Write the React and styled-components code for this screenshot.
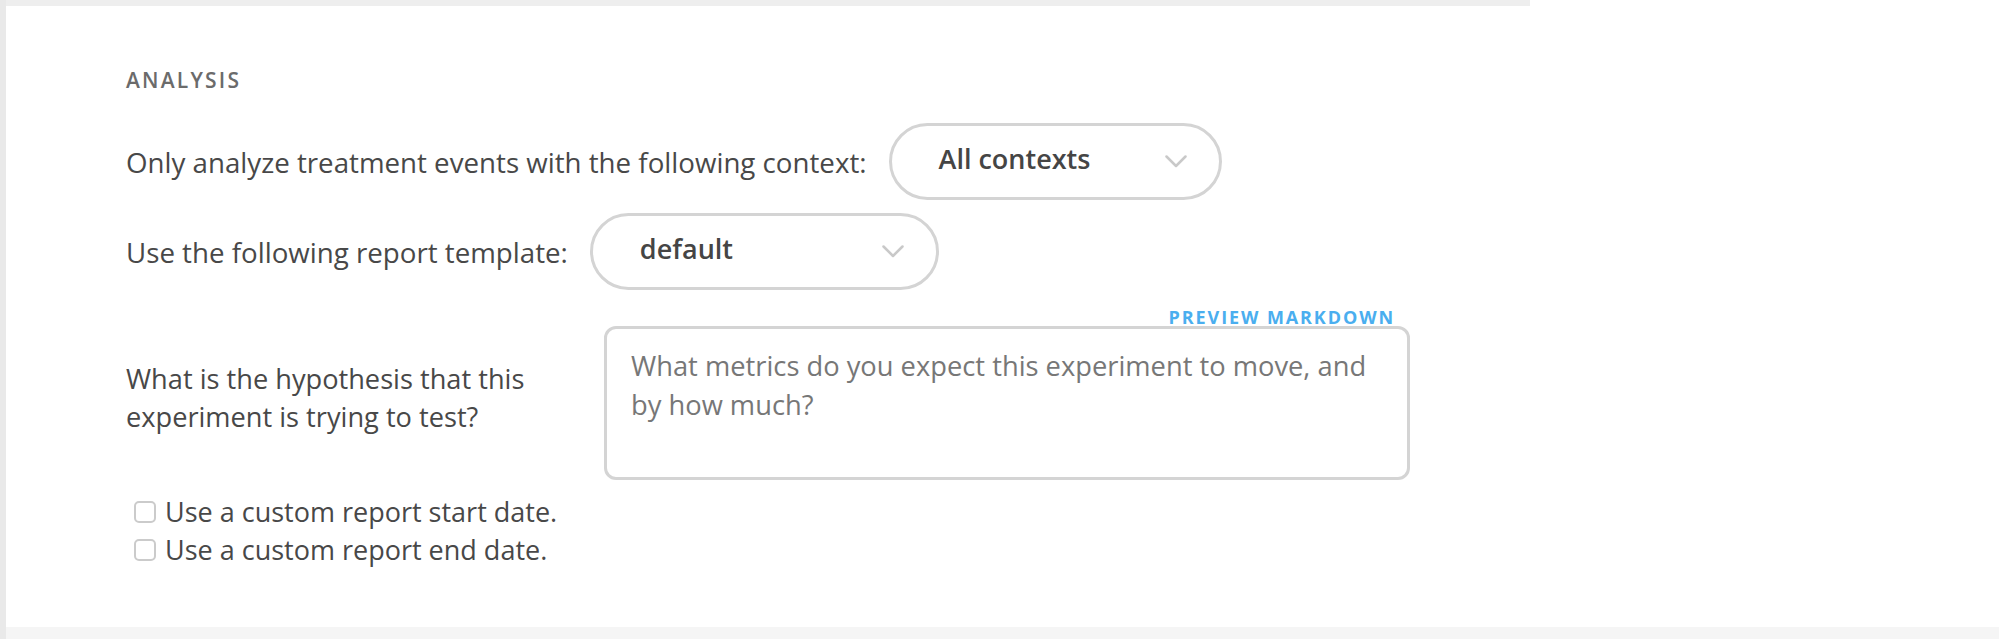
import React from 'react';
import styled, { createGlobalStyle } from 'styled-components';

const FONT = `"Open Sans", "Noto Sans", "Liberation Sans", sans-serif`;

const GlobalStyle = createGlobalStyle`
    html, body {
        margin: 0;
        padding: 0;
        background: #ffffff;
    }
    body {
        font-family: ${FONT};
        color: #4a4a4a;
    }
`;

const Chevron = () => (
    <svg width="22" height="13" viewBox="0 0 22 13" fill="none">
        <polyline points="1.5,1.5 11,11 20.5,1.5" stroke="#c9c9c9" strokeWidth="2.5" strokeLinecap="round" strokeLinejoin="round" />
    </svg>
);

const Select = ({ value, width }) => (
    <SelectBox width={width}>
        <SelectValue>{value}</SelectValue>
        <Chevron />
    </SelectBox>
);

const Checkbox = ({ label }) => (
    <CheckRow>
        <CheckSquare />
        <span>{label}</span>
    </CheckRow>
);

export default function App() {
    return (
        <Page>
            <GlobalStyle />
            <LeftRail />
            <Main>
                <TopBar />
                <Section>
                    <Heading>ANALYSIS</Heading>
                    <FieldRow>
                        <Label>Only analyze treatment events with the following context:</Label>
                        <Select value="All contexts" width={333} />
                    </FieldRow>
                    <FieldRow>
                        <Label>Use the following report template:</Label>
                        <Select value="default" width={349} />
                    </FieldRow>
                    <HypothesisGrid>
                        <span />
                        <PreviewLink>PREVIEW MARKDOWN</PreviewLink>
                        <HypothesisLabel>What is the hypothesis that this experiment is trying to test?</HypothesisLabel>
                        <TextArea placeholder={'What metrics do you expect this experiment to move, and\nby how much?'} />
                    </HypothesisGrid>
                    <CheckList>
                        <Checkbox label="Use a custom report start date." />
                        <Checkbox label="Use a custom report end date." />
                    </CheckList>
                </Section>
                <BottomBar />
            </Main>
        </Page>
    );
}

const Page = styled.div`
    display: flex;
    height: 639px;
    overflow: hidden;
`;

const LeftRail = styled.div`
    width: 6px;
    flex-shrink: 0;
    background: #e9e9e9;
`;

const Main = styled.div`
    flex: 1;
    display: flex;
    flex-direction: column;
`;

const TopBar = styled.div`
    height: 6px;
    width: 1524px;
    background: #eeeeee;
`;

const Section = styled.div`
    flex: 1;
    padding: 62px 0 0 120px;
    display: flex;
    flex-direction: column;
`;

const BottomBar = styled.div`
    height: 12px;
    background: #f5f5f5;
`;

const Heading = styled.div`
    font-size: 21px;
    line-height: 24px;
    font-weight: 600;
    letter-spacing: 2.2px;
    color: #6b6b6b;
    margin-bottom: 31px;
`;

const FieldRow = styled.div`
    display: flex;
    align-items: center;
    gap: 22px;
    margin-bottom: 13px;
`;

const Label = styled.span`
    font-size: 27.7px;
    line-height: 38px;
    color: #484848;
`;

const SelectBox = styled.div`
    box-sizing: border-box;
    width: ${(props) => props.width}px;
    height: 77px;
    border: 3px solid #d4d4d4;
    border-radius: 40px;
    display: flex;
    align-items: center;
    justify-content: space-between;
    padding: 0 32px 0 47px;
    background: #ffffff;
`;

const SelectValue = styled.span`
    font-size: 27px;
    font-weight: 600;
    color: #454545;
    margin-top: -6px;
`;

const HypothesisGrid = styled.div`
    display: grid;
    grid-template-columns: 460px 806px;
    column-gap: 18px;
    row-gap: 0;
    align-items: center;
    margin-top: 5px;
`;

const PreviewLink = styled.span`
    justify-self: end;
    margin-right: 15px;
    font-size: 18px;
    line-height: 18px;
    font-weight: 700;
    letter-spacing: 1.9px;
    color: #4aaeef;
`;

const HypothesisLabel = styled.span`
    font-size: 27.2px;
    line-height: 38px;
    color: #484848;
    margin-top: -10px;
`;

const TextArea = styled.textarea`
    box-sizing: border-box;
    width: 806px;
    height: 154px;
    border: 3px solid #d4d4d4;
    border-radius: 12px;
    padding: 17px 8px 0 24px;
    font-family: ${FONT};
    font-size: 27.3px;
    line-height: 39px;
    resize: none;
    outline: none;
    &::placeholder {
        color: #777777;
    }
`;

const CheckList = styled.div`
    display: flex;
    flex-direction: column;
    margin-top: 13px;
    padding-left: 8px;
`;

const CheckRow = styled.label`
    display: flex;
    align-items: center;
    gap: 9px;
    font-size: 27px;
    line-height: 38px;
    color: #484848;
`;

const CheckSquare = styled.span`
    box-sizing: border-box;
    width: 22px;
    height: 22px;
    border: 2px solid #cbcbcb;
    border-radius: 5px;
    background: #ffffff;
    flex-shrink: 0;
`;
